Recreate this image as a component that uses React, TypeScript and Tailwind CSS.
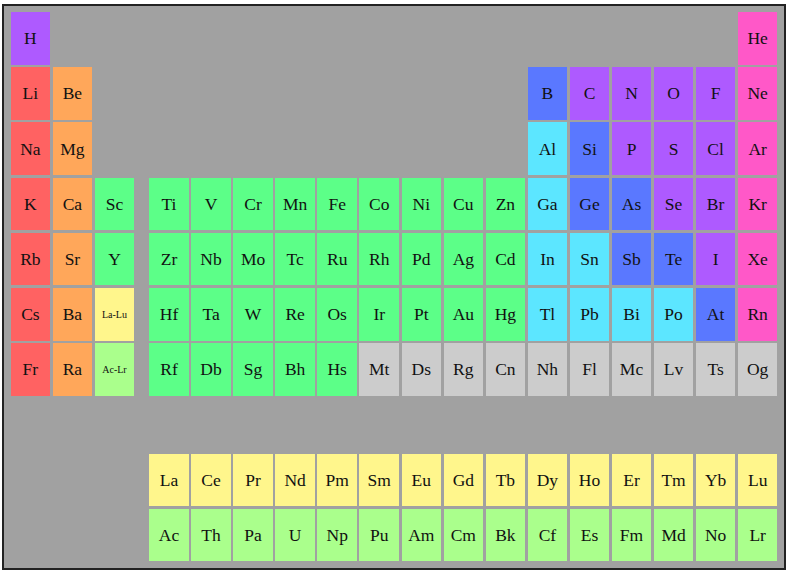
const colors: Record<string, string> = {
  n: "bg-[#ae5aff]",
  a: "bg-[#ff6262]",
  e: "bg-[#ffa75a]",
  t: "bg-[#5cff88]",
  p: "bg-[#5ce6ff]",
  m: "bg-[#5a78ff]",
  g: "bg-[#ff58c8]",
  u: "bg-[#cccccc]",
  l: "bg-[#fff68c]",
  c: "bg-[#aaff8c]",
}

// symbol:colour, "_" leaves a grid cell empty
const rows = [
  "H:n _ _ _ _ _ _ _ _ _ _ _ _ _ _ _ _ _ He:g",
  "Li:a Be:e _ _ _ _ _ _ _ _ _ _ _ B:m C:n N:n O:n F:n Ne:g",
  "Na:a Mg:e _ _ _ _ _ _ _ _ _ _ _ Al:p Si:m P:n S:n Cl:n Ar:g",
  "K:a Ca:e Sc:t _ Ti:t V:t Cr:t Mn:t Fe:t Co:t Ni:t Cu:t Zn:t Ga:p Ge:m As:m Se:n Br:n Kr:g",
  "Rb:a Sr:e Y:t _ Zr:t Nb:t Mo:t Tc:t Ru:t Rh:t Pd:t Ag:t Cd:t In:p Sn:p Sb:m Te:m I:n Xe:g",
  "Cs:a Ba:e La-Lu:l _ Hf:t Ta:t W:t Re:t Os:t Ir:t Pt:t Au:t Hg:t Tl:p Pb:p Bi:p Po:p At:m Rn:g",
  "Fr:a Ra:e Ac-Lr:c _ Rf:t Db:t Sg:t Bh:t Hs:t Mt:u Ds:u Rg:u Cn:u Nh:u Fl:u Mc:u Lv:u Ts:u Og:u",
  "_ _ _ _ _ _ _ _ _ _ _ _ _ _ _ _ _ _ _",
  "_ _ _ _ La:l Ce:l Pr:l Nd:l Pm:l Sm:l Eu:l Gd:l Tb:l Dy:l Ho:l Er:l Tm:l Yb:l Lu:l",
  "_ _ _ _ Ac:c Th:c Pa:c U:c Np:c Pu:c Am:c Cm:c Bk:c Cf:c Es:c Fm:c Md:c No:c Lr:c",
]

export default function App() {
  return (
    <div className="h-[573px] w-[789px] bg-white pl-[2px] pt-[4px] font-['Liberation_Serif',serif]">
      <div className="h-[566px] w-[784px] border-2 border-[#222222] bg-[#a1a1a1] pl-[6.6px] pt-[6px]">
        <div className="grid grid-cols-[repeat(3,39.55px)_10px_repeat(15,39.55px)] grid-rows-[repeat(10,52.7px)] gap-[2.5px]">
          {rows.flatMap((row, r) =>
            row.split(" ").map((cell, i) => {
              if (cell === "_") return <div key={`${r}-${i}`} />
              const [symbol, kind] = cell.split(":")
              const small = symbol.includes("-")
              return (
                <div
                  key={symbol}
                  className={`flex items-center justify-center text-[#111111] ${colors[kind]} ${small ? "text-[10px]" : "text-[17.5px]"}`}
                >
                  {symbol}
                </div>
              )
            })
          )}
        </div>
      </div>
    </div>
  )
}
